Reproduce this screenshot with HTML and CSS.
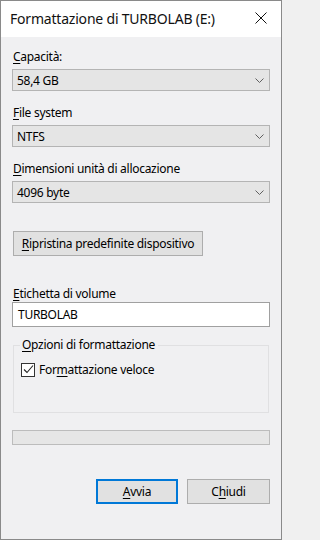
FILE: index.html
```html
<!DOCTYPE html>
<html lang="it">
<head>
<meta charset="utf-8">
<title>Formattazione di TURBOLAB (E:)</title>
<link rel="stylesheet" href="styles.css">
</head>
<body>
<div class="window">
  <div class="titlebar">
    <span class="title">Formattazione di TURBOLAB (E:)</span>
    <svg class="close" width="12" height="12" viewBox="0 0 12 12"><path d="M0.5 0.5 L11.5 11.5 M11.5 0.5 L0.5 11.5" stroke="#111" stroke-width="1" fill="none"/></svg>
  </div>
  <div class="content">
    <div class="field">
      <div class="label"><u>C</u>apacità:</div>
      <div class="select"><span>58,4 GB</span><svg class="chev" width="9" height="5" viewBox="0 0 9 5"><path d="M0.5 0.5 L4.5 4.5 L8.5 0.5" stroke="#606060" fill="none"/></svg></div>
    </div>
    <div class="field">
      <div class="label"><u>F</u>ile system</div>
      <div class="select"><span>NTFS</span><svg class="chev" width="9" height="5" viewBox="0 0 9 5"><path d="M0.5 0.5 L4.5 4.5 L8.5 0.5" stroke="#606060" fill="none"/></svg></div>
    </div>
    <div class="field">
      <div class="label"><u>D</u>imensioni unità di allocazione</div>
      <div class="select"><span>4096 byte</span><svg class="chev" width="9" height="5" viewBox="0 0 9 5"><path d="M0.5 0.5 L4.5 4.5 L8.5 0.5" stroke="#606060" fill="none"/></svg></div>
    </div>
    <div class="restore-row">
      <div class="btn restore"><u>R</u>ipristina predefinite dispositivo</div>
    </div>
    <div class="field volume">
      <div class="label"><u>E</u>tichetta di volume</div>
      <div class="input">TURBOLAB</div>
    </div>
    <div class="group">
      <div class="legend"><u>O</u>pzioni di formattazione</div>
      <div class="check-row">
        <span class="checkbox"><svg width="11" height="11" viewBox="0 0 11 11"><path d="M1 5.5 L4 8.5 L10 1.5" stroke="#222" stroke-width="1.1" fill="none"/></svg></span>
        <span>For<u>m</u>attazione veloce</span>
      </div>
    </div>
    <div class="progress"></div>
    <div class="actions">
      <div class="btn action default"><u>A</u>vvia</div>
      <div class="btn action">C<u>h</u>iudi</div>
    </div>
  </div>
</div>
</body>
</html>
```

FILE: styles.css
```css
html, body {
  margin: 0;
  padding: 0;
  background: #f0f0f0;
}
body {
  width: 282px;
  height: 540px;
  font-family: "Noto Sans", "Open Sans", sans-serif;
  font-size: 12px;
  letter-spacing: -0.28px;
  color: #000;
}
.window {
  box-sizing: border-box;
  width: 282px;
  height: 540px;
  border: 1px solid #8a8a8a;
  background: #f0f0f2;
  display: flex;
  flex-direction: column;
}
.titlebar {
  height: 36px;
  background: #fff;
  display: flex;
  align-items: center;
  justify-content: space-between;
  padding: 0 14px 0 9px;
}
.title {
  font-size: 14px;
  letter-spacing: -0.2px;
  color: #111;
  margin-top: -2px;
}
.close {
  margin-top: -3px;
}
.content {
  padding: 12px 11px 0 11px;
  display: flex;
  flex-direction: column;
}
u {
  text-decoration-thickness: 1px;
  text-underline-offset: 2px;
}
.field {
  display: flex;
  flex-direction: column;
  margin-bottom: 14px;
}
.label {
  height: 16px;
  line-height: 16px;
  padding-left: 1px;
  margin-bottom: 4px;
}
.select {
  box-sizing: border-box;
  height: 22px;
  background: #e5e5e5;
  border: 1px solid #b4b4b4;
  display: flex;
  align-items: center;
  justify-content: space-between;
  padding: 0 5px 0 4px;
}
.chev {
  margin-top: 1px;
}
.restore-row {
  display: flex;
  margin-top: 14px;
  margin-bottom: 30px;
}
.btn {
  box-sizing: border-box;
  background: #e1e1e1;
  border: 1px solid #adadad;
  display: flex;
  align-items: center;
  justify-content: center;
}
.restore {
  margin-left: 1px;
  height: 25px;
  width: 190px;
}
.volume {
  margin-bottom: 18px;
}
.volume .label {
  margin-bottom: 0;
}
.input {
  box-sizing: border-box;
  height: 25px;
  background: #fff;
  border: 1px solid #a0a0a0;
  display: flex;
  align-items: center;
  padding-left: 5px;
}
.group {
  box-sizing: border-box;
  position: relative;
  margin-left: 1px;
  margin-right: 1px;
  height: 68px;
  border: 1px solid #e0e0e2;
  padding: 15px 0 0 7px;
}
.legend {
  position: absolute;
  top: -9px;
  left: 6px;
  padding: 0 3px 0 2px;
  background: #f0f0f2;
  line-height: 16px;
}
.check-row {
  display: flex;
  align-items: center;
  gap: 4px;
}
.checkbox {
  box-sizing: border-box;
  width: 14px;
  height: 14px;
  border: 1px solid #333;
  background: #fff;
  display: flex;
  align-items: center;
  justify-content: center;
}
.progress {
  box-sizing: border-box;
  margin-top: 17px;
  height: 15px;
  background: #e6e6e6;
  border: 1px solid #bcbcbc;
}
.actions {
  display: flex;
  justify-content: flex-end;
  gap: 9px;
  margin-top: 34px;
}
.action {
  width: 83px;
  height: 25px;
}
.action.default {
  width: 82px;
  border: 2px solid #0078d7;
}
```
